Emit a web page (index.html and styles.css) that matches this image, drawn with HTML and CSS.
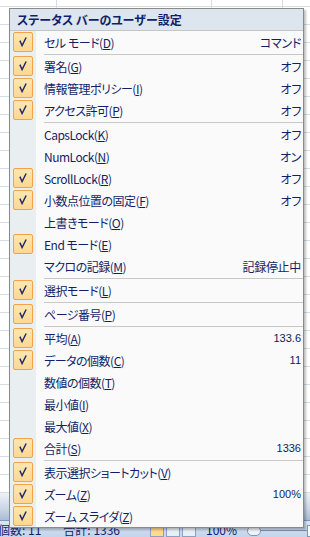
FILE: index.html
```html
<!DOCTYPE html>
<html lang="ja">
<head>
    <meta charset="UTF-8">
    <meta name="viewport" content="width=device-width, initial-scale=1.0">
    <title>ステータス バーのユーザー設定</title>
    <link rel="stylesheet" href="styles.css">
</head>
<body>

    <div class="screen">
        <!-- spreadsheet behind the popup -->
        <div class="sheet">
            <div class="col c1"></div>
            <div class="col c2"></div>
            <div class="col c3"></div>
            <div class="col c4"></div>
        </div>
        <div class="hscroll"></div>
        <div class="statusbar">
            <span class="st-count">個数: 11</span>
            <span class="st-sum">合計: 1336</span>
            <span class="st-views">
                <span class="view-btn active"></span>
                <span class="view-btn"></span>
                <span class="view-btn"></span>
            </span>
            <span class="st-zoom">100%</span>
            <span class="zoom-minus"></span>
            <span class="zoom-track"><span class="zoom-thumb"></span></span>
        </div>

        <!-- the context menu -->
        <div class="menu">
            <div class="menu-title">ステータス バーのユーザー設定</div>
            <div class="items">
                <div class="item on"><span class="gut"><span class="check"></span></span><span class="label">セル モード(<u>D</u>)</span><span class="value">コマンド</span></div>
                <div class="sep"></div>
                <div class="item on"><span class="gut"><span class="check"></span></span><span class="label">署名(<u>G</u>)</span><span class="value">オフ</span></div>
                <div class="item on"><span class="gut"><span class="check"></span></span><span class="label">情報管理ポリシー(<u>I</u>)</span><span class="value">オフ</span></div>
                <div class="item on"><span class="gut"><span class="check"></span></span><span class="label">アクセス許可(<u>P</u>)</span><span class="value">オフ</span></div>
                <div class="sep"></div>
                <div class="item"><span class="gut"></span><span class="label">CapsLock(<u>K</u>)</span><span class="value">オフ</span></div>
                <div class="item"><span class="gut"></span><span class="label">NumLock(<u>N</u>)</span><span class="value">オン</span></div>
                <div class="item on"><span class="gut"><span class="check"></span></span><span class="label">ScrollLock(<u>R</u>)</span><span class="value">オフ</span></div>
                <div class="item on"><span class="gut"><span class="check"></span></span><span class="label">小数点位置の固定(<u>F</u>)</span><span class="value">オフ</span></div>
                <div class="item"><span class="gut"></span><span class="label">上書きモード(<u>O</u>)</span></div>
                <div class="item on"><span class="gut"><span class="check"></span></span><span class="label">End モード(<u>E</u>)</span></div>
                <div class="item"><span class="gut"></span><span class="label">マクロの記録(<u>M</u>)</span><span class="value">記録停止中</span></div>
                <div class="sep"></div>
                <div class="item on"><span class="gut"><span class="check"></span></span><span class="label">選択モード(<u>L</u>)</span></div>
                <div class="sep"></div>
                <div class="item on"><span class="gut"><span class="check"></span></span><span class="label">ページ番号(<u>P</u>)</span></div>
                <div class="sep"></div>
                <div class="item on"><span class="gut"><span class="check"></span></span><span class="label">平均(<u>A</u>)</span><span class="value num">133.6</span></div>
                <div class="item on"><span class="gut"><span class="check"></span></span><span class="label">データの個数(<u>C</u>)</span><span class="value num">11</span></div>
                <div class="item"><span class="gut"></span><span class="label">数値の個数(<u>T</u>)</span></div>
                <div class="item"><span class="gut"></span><span class="label">最小値(<u>I</u>)</span></div>
                <div class="item"><span class="gut"></span><span class="label">最大値(<u>X</u>)</span></div>
                <div class="item on"><span class="gut"><span class="check"></span></span><span class="label">合計(<u>S</u>)</span><span class="value num">1336</span></div>
                <div class="sep"></div>
                <div class="item on"><span class="gut"><span class="check"></span></span><span class="label">表示選択ショートカット(<u>V</u>)</span></div>
                <div class="item on"><span class="gut"><span class="check"></span></span><span class="label">ズーム(<u>Z</u>)</span><span class="value num">100%</span></div>
                <div class="item on"><span class="gut"><span class="check"></span></span><span class="label">ズーム スライダ(<u>Z</u>)</span></div>
            </div>
        </div>
    </div>

    <script>
        // put the same check glyph in every ticked box
        const tick = '<svg width="20" height="20" viewBox="0 0 20 20"><path d="M6.5 8.5 L9 14 L13.5 5" fill="none" stroke="#1b2a6e" stroke-width="1.6"/></svg>';
        document.querySelectorAll(".check").forEach(function (box) {
            box.innerHTML = tick;
        });
    </script>

</body>
</html>
```

FILE: styles.css
```css
body {
    margin: 0;
    font-family: "Noto Sans CJK JP", sans-serif;
    background-color: #ffffff;
}
.screen {
    position: relative;
    width: 310px;
    height: 537px;
    overflow: hidden;
    display: flex;
    flex-direction: column;
}

/* sheet grid */
.sheet {
    height: 499px;
    display: flex;
    background-color: #ffffff;
    background-image: repeating-linear-gradient(to bottom, transparent 0, transparent 6px, #d6dbe4 6px, #d6dbe4 7px, transparent 7px, transparent 18px);
}
.col {
    border-right: 1px solid #d6dbe4;
}
.c1 { width: 56px; }
.c2 { width: 154px; }
.c3 { width: 70px; }
.c4 { flex: 1; border-right: none; }

.hscroll {
    height: 27px;
    background: linear-gradient(to bottom, #eef2f7, #c9d5e5 60%, #a9bbd4);
    border-bottom: 1px solid #7f96b8;
}
.statusbar {
    flex: 1;
    display: flex;
    align-items: flex-start;
    padding-top: 2px;
    background: linear-gradient(to bottom, #dae6f5, #c3d4eb);
    color: #15216b;
    font-size: 12px;
    line-height: 14px;
    white-space: nowrap;
}
.st-count { margin-left: -2px; }
.st-sum { margin-left: 22px; }
.st-views {
    display: flex;
    gap: 2px;
    margin-left: 30px;
    margin-top: 2px;
}
.view-btn {
    width: 12px;
    height: 10px;
    border: 1px solid #8aa1c2;
    background: #e9eff7;
}
.view-btn.active { background: #ffd98e; }
.st-zoom { margin-left: 10px; }
.zoom-minus {
    width: 12px;
    height: 8px;
    margin-left: 10px;
    margin-top: 3px;
    border: 1px solid #7f96b8;
    border-radius: 5px;
    background: #eef3fa;
}
.zoom-track {
    flex: 1;
    position: relative;
    height: 1px;
    margin-top: 7px;
    background: #7f96b8;
}
.zoom-thumb {
    position: absolute;
    left: 46px;
    top: -5px;
    width: 8px;
    height: 10px;
    border: 1px solid #7f96b8;
    background: #f3f6fb;
}

/* popup menu */
.menu {
    position: absolute;
    left: 9px;
    top: 8px;
    width: 293px;
    border: 1px solid #8a8a8a;
    background-color: #fafafa;
    box-shadow: 2px 2px 2px rgba(0, 0, 0, 0.25);
    color: #121f68;
    font-size: 12px;
    font-feature-settings: "palt";
}
.menu-title {
    height: 22px;
    line-height: 22px;
    padding-left: 7px;
    background-color: #dde6ee;
    border-bottom: 1px solid #c5c5c5;
    font-weight: bold;
    box-sizing: border-box;
}
.items {
    background: linear-gradient(to right, #e9eef0 26px, #fafafa 26px);
}
.item {
    display: flex;
    align-items: center;
    height: 22px;
    white-space: nowrap;
}
.gut {
    width: 26px;
    height: 22px;
    display: flex;
    align-items: center;
}
.check {
    width: 18px;
    height: 18px;
    margin-left: 3px;
    border: 1px solid #f2a248;
    border-radius: 2px;
    background: linear-gradient(to bottom, #ffe6b0, #fed792);
    display: flex;
    align-items: center;
    justify-content: center;
}
.check svg {
    display: block;
}
.label {
    padding-left: 8px;
    letter-spacing: -0.5px;
}
.label u {
    text-underline-offset: 1px;
}
.value {
    margin-left: auto;
    padding-right: 2px;
    letter-spacing: -0.3px;
}
.value.num {
    font-family: "Liberation Sans", sans-serif;
    font-size: 11px;
    letter-spacing: 0;
    color: #0e1a5e;
}
.sep {
    height: 2px;
    margin-left: 34px;
    border-bottom: 1px solid #c8c8c8;
    box-sizing: border-box;
}
```
